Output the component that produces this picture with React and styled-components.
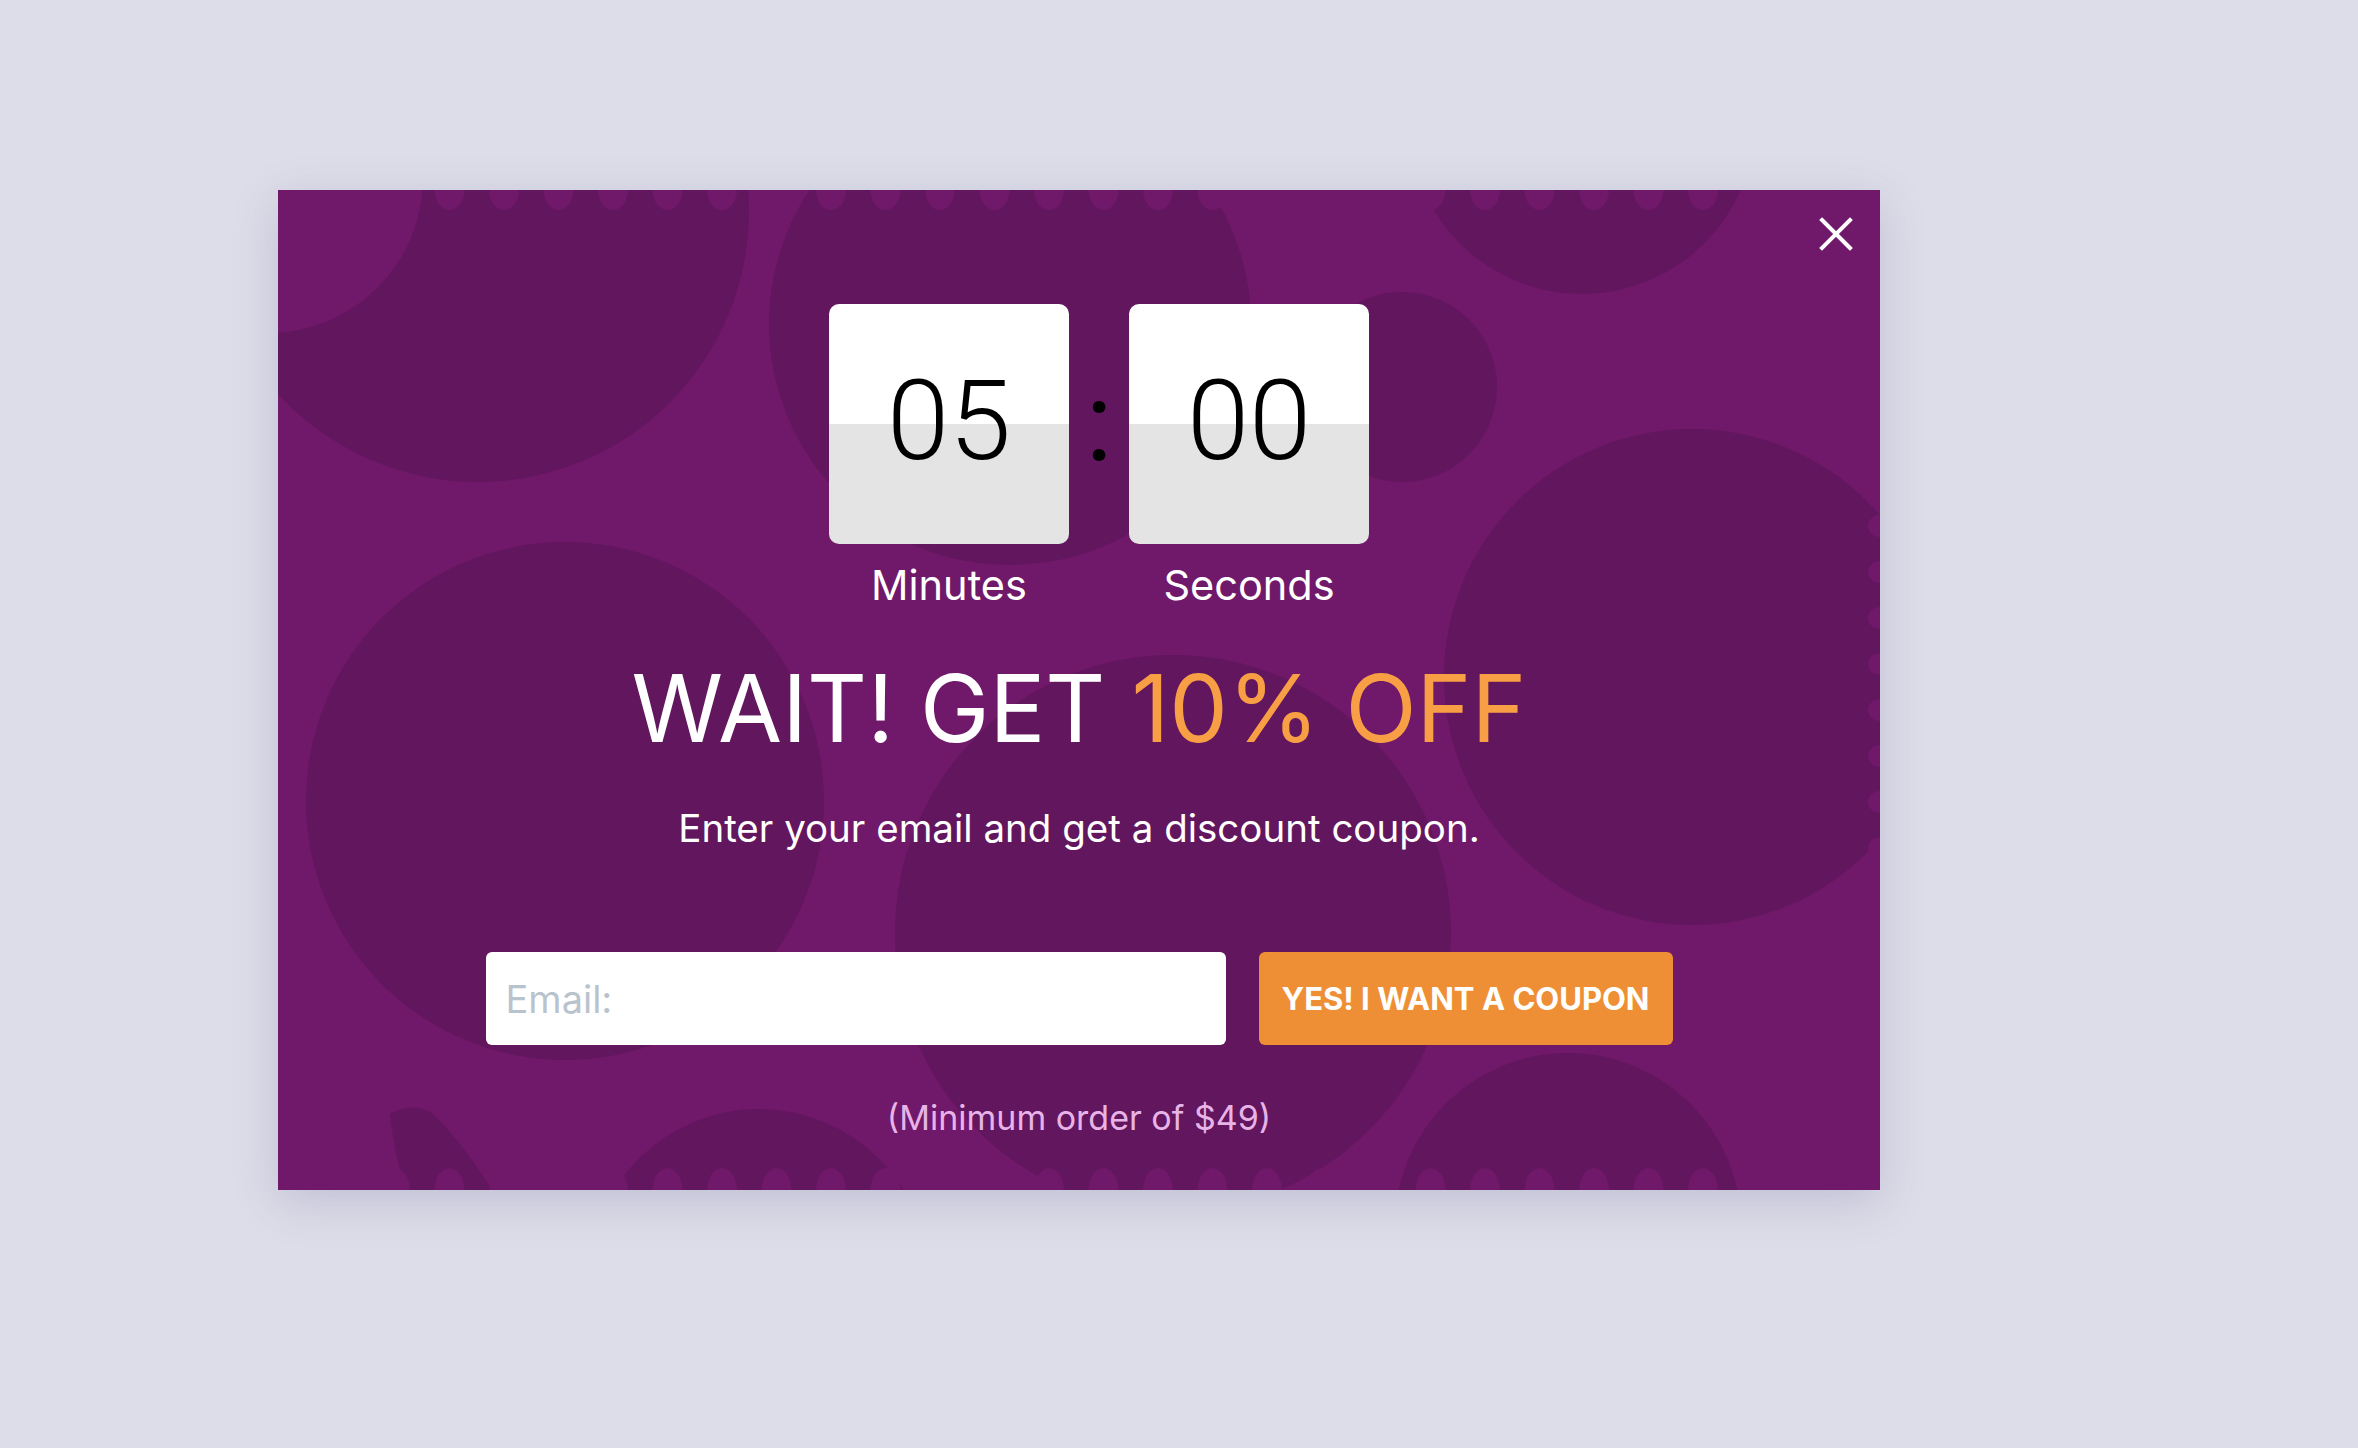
import styled, { createGlobalStyle } from 'styled-components';

const GlobalStyle = createGlobalStyle`
  html, body {
    margin: 0;
    padding: 0;
  }
  body {
    background: #dddde9;
    font-family: Inter, "Noto Sans", sans-serif;
    overflow: hidden;
  }
`;

const Page = styled.main`
  box-sizing: border-box;
  width: 2358px;
  height: 1448px;
  padding: 190px 0 0 278px;
`;

const Popup = styled.section`
  position: relative;
  box-sizing: border-box;
  width: 1602px;
  height: 1000px;
  padding-top: 114px;
  background: #701869;
  overflow: hidden;
  box-shadow: 0 12px 44px rgba(70, 60, 120, 0.18);
`;

const Backdrop = styled.svg`
  position: absolute;
  inset: 0;
  width: 100%;
  height: 100%;
  z-index: 0;
`;

const Content = styled.div`
  position: relative;
  z-index: 1;
  display: flex;
  flex-direction: column;
  align-items: center;
`;

const CloseButton = styled.button`
  position: absolute;
  top: 26px;
  right: 26px;
  z-index: 2;
  width: 36px;
  height: 36px;
  padding: 0;
  border: none;
  background: none;
  cursor: pointer;
`;

const TimerRow = styled.div`
  display: flex;
  align-items: flex-start;
  margin-left: 40px;
`;

const TimerUnit = styled.div`
  display: flex;
  flex-direction: column;
  align-items: center;
`;

const DigitBox = styled.div`
  box-sizing: border-box;
  width: 240px;
  height: 240px;
  padding-bottom: 6px;
  display: flex;
  align-items: center;
  justify-content: center;
  border-radius: 10px;
  background: linear-gradient(to bottom, #ffffff 50%, #e4e4e4 50%);
  font-family: Roboto, "Liberation Sans", sans-serif;
  font-size: 112px;
  font-weight: 300;
  line-height: 1;
  color: #000;
`;

const Colon = styled.span`
  width: 60px;
  height: 240px;
  text-align: center;
  font-family: Roboto, "Liberation Sans", sans-serif;
  font-size: 112px;
  line-height: 236px;
  color: #000;
`;

const UnitLabel = styled.span`
  margin-top: 11px;
  font-size: 41.5px;
  line-height: 60px;
  color: #ffffff;
`;

const Heading = styled.h1`
  margin: 34px 0 0;
  font-size: 93px;
  font-weight: 400;
  line-height: 118px;
  color: #ffffff;
  white-space: nowrap;
`;

const Accent = styled.span`
  color: #f89f45;
`;

const Subtitle = styled.p`
  margin: 36px 0 0;
  font-size: 38.5px;
  line-height: 51px;
  color: #ffffff;
`;

const CouponForm = styled.form`
  display: flex;
  gap: 33px;
  margin-top: 98px;
`;

const EmailInput = styled.input`
  box-sizing: border-box;
  width: 740px;
  height: 93px;
  padding: 0 20px;
  border: none;
  border-radius: 6px;
  background: #ffffff;
  font-family: Inter, "Noto Sans", sans-serif;
  font-size: 38px;
  color: #333;
  outline: none;

  &::placeholder {
    color: #b9c3cd;
  }
`;

const SubmitButton = styled.button`
  width: 414px;
  height: 93px;
  border: none;
  border-radius: 6px;
  background: #ef8f35;
  color: #ffffff;
  font-family: Inter, "Noto Sans", sans-serif;
  font-size: 31px;
  font-weight: 700;
  text-transform: uppercase;
  cursor: pointer;
`;

const Note = styled.p`
  margin: 50px 0 0;
  font-size: 34px;
  line-height: 45px;
  color: #e8b4e8;
`;

const BASE = '#701869';
const DARK = '#62165e';

const circles = [
  { cx: 200, cy: 21, r: 271, fill: DARK },
  { cx: -10, cy: -12, r: 155, fill: BASE },
  { cx: 732, cy: 134, r: 241, fill: DARK },
  { cx: 1124, cy: 197, r: 95, fill: DARK },
  { cx: 1304, cy: -69, r: 173, fill: DARK },
  { cx: 1414, cy: 487, r: 248, fill: DARK },
  { cx: 287, cy: 611, r: 259, fill: DARK },
  { cx: 895, cy: 743, r: 278, fill: DARK },
  { cx: 1290, cy: 1036, r: 173, fill: DARK },
  { cx: 481, cy: 1089, r: 170, fill: DARK },
];

const horizontalBumps = Array.from({ length: 30 }, (_, i) => 8 + i * 54.5);
const sideBumps = Array.from({ length: 22 }, (_, i) => 14 + i * 46);

function Decoration() {
  return (
    <Backdrop viewBox="0 0 1602 1000" preserveAspectRatio="none" aria-hidden="true">
      {circles.map((c, i) => (
        <circle key={i} cx={c.cx} cy={c.cy} r={c.r} fill={c.fill} />
      ))}
      <path d="M112 924 Q116 962 127 1000 L214 1000 Q184 952 153 922 Q132 912 112 924 Z" fill={DARK} />
      {horizontalBumps.map((x) => (
        <ellipse key={`t${x}`} cx={x} cy={0} rx={15} ry={20} fill={BASE} />
      ))}
      {horizontalBumps.map((x) => (
        <ellipse key={`b${x}`} cx={x} cy={1000} rx={15} ry={22} fill={BASE} />
      ))}
      {sideBumps.map((y) => (
        <ellipse key={`r${y}`} cx={1602} cy={y} rx={12} ry={11} fill={BASE} />
      ))}
    </Backdrop>
  );
}

export default function App() {
  return (
    <>
      <GlobalStyle />
      <Page>
        <Popup>
          <Decoration />
          <CloseButton aria-label="Close">
            <svg width="36" height="36" viewBox="0 0 36 36">
              <path d="M4 4 L32 32 M32 4 L4 32" stroke="#fff" strokeWidth="4" strokeLinecap="square" />
            </svg>
          </CloseButton>
          <Content>
            <TimerRow>
              <TimerUnit>
                <DigitBox>05</DigitBox>
                <UnitLabel>Minutes</UnitLabel>
              </TimerUnit>
              <Colon>:</Colon>
              <TimerUnit>
                <DigitBox>00</DigitBox>
                <UnitLabel>Seconds</UnitLabel>
              </TimerUnit>
            </TimerRow>
            <Heading>
              WAIT! GET <Accent>10% OFF</Accent>
            </Heading>
            <Subtitle>Enter your email and get a discount coupon.</Subtitle>
            <CouponForm onSubmit={(e) => e.preventDefault()}>
              <EmailInput type="email" placeholder="Email:" />
              <SubmitButton type="submit">Yes! I want a coupon</SubmitButton>
            </CouponForm>
            <Note>(Minimum order of $49)</Note>
          </Content>
        </Popup>
      </Page>
    </>
  );
}
